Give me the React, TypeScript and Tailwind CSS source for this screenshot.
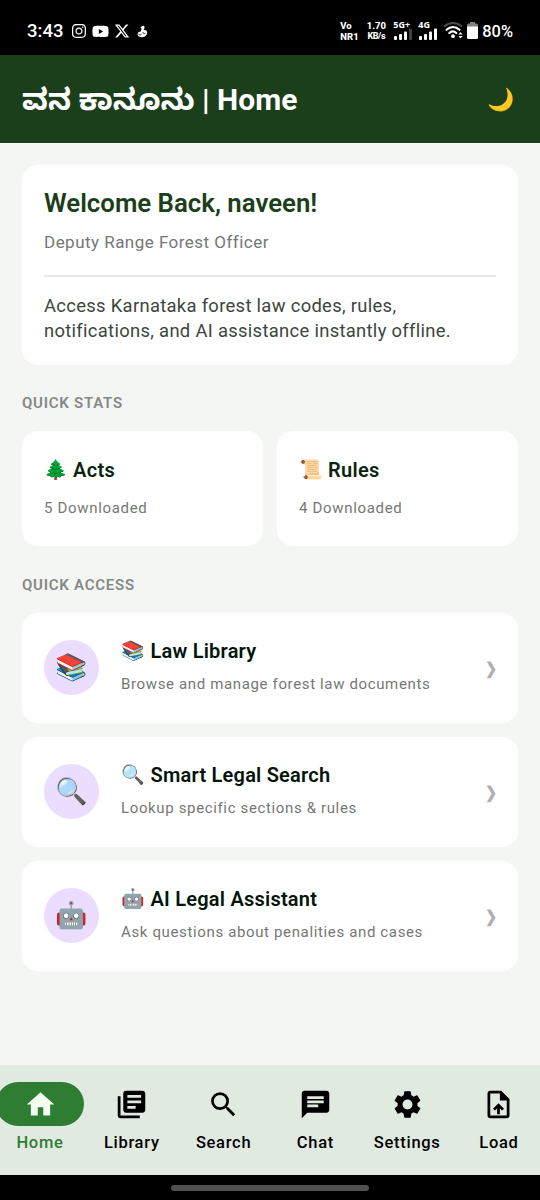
import type { ReactNode } from 'react';
import { FaInstagram, FaXTwitter, FaYoutube } from 'react-icons/fa6';
import { MdChat, MdHome, MdLibraryBooks, MdSearch, MdSettings, MdUploadFile } from 'react-icons/md';

type StatCardProps = {
  emoji: string;
  title: string;
  caption: string;
};

type AccessCardProps = {
  emoji: string;
  title: string;
  description: string;
};

const stats: StatCardProps[] = [
  { emoji: '🌲', title: 'Acts', caption: '5 Downloaded' },
  { emoji: '📜', title: 'Rules', caption: '4 Downloaded' },
];

const accessItems: AccessCardProps[] = [
  { emoji: '📚', title: 'Law Library', description: 'Browse and manage forest law documents' },
  { emoji: '🔍', title: 'Smart Legal Search', description: 'Lookup specific sections & rules' },
  { emoji: '🤖', title: 'AI Legal Assistant', description: 'Ask questions about penalities and cases' },
];

const navItems = [
  { label: 'Home', icon: MdHome, active: true },
  { label: 'Library', icon: MdLibraryBooks },
  { label: 'Search', icon: MdSearch },
  { label: 'Chat', icon: MdChat },
  { label: 'Settings', icon: MdSettings },
  { label: 'Load', icon: MdUploadFile },
];

function SignalBars({ label, dimLast }: { label: string; dimLast?: boolean }) {
  return (
    <div className="flex h-[19px] w-5 flex-col justify-between pb-[1px]">
      <span className="font-['Noto_Sans'] text-[9px] leading-[7px] font-bold whitespace-nowrap">{label}</span>
      <svg viewBox="0 0 20 12" className="h-3 w-5 shrink-0" fill="currentColor">
        <rect x="1" y="8" width="3" height="4" rx="1" />
        <rect x="6" y="6" width="3" height="6" rx="1" />
        <rect x="11" y="3.5" width="3" height="8.5" rx="1" />
        <rect x="16" y="0.5" width="3" height="11.5" rx="1" opacity={dimLast ? 0.25 : 1} />
      </svg>
    </div>
  );
}

function StatusBar() {
  return (
    <div className="flex h-[55px] shrink-0 items-center bg-black pt-[7px] pr-[27px] pl-[27px] text-white">
      <span className="pt-[1px] text-[18.5px] font-medium">3:43</span>
      <FaInstagram className="ml-2 size-[16px]" />
      <FaYoutube className="ml-[5px] size-[17px]" />
      <FaXTwitter className="ml-[5px] size-[16px]" />
      <svg viewBox="0 0 12 14" className="ml-[7px] h-[13px] w-[11px]" fill="currentColor">
        <path d="M5.2 1.4C6.5.4 8 .8 8.2 2.2c.2 1.2-.7 2.2-.9 3.3 1.6-.5 3.2.3 3.6 1.8.7 3-1.7 5.9-5.5 5.9C2.7 13.2.8 12 .6 10.2.4 8.4 1.9 7 3.6 7.2 4.6 6 5 4.7 4.9 3.6L3.7 2.8z" />
        <path d="M1.5 9.8c1 1 2.4.9 3.3.2M6.3 7.7c.2 1.2 1.3 1.8 2.7 1.3" fill="none" stroke="#000" strokeWidth="0.9" />
      </svg>
      <div className="ml-auto flex items-center">
        <div className="w-[19px] text-[9.5px] leading-[11px] font-extrabold">
          <div>Vo</div>
          <div>NR1</div>
        </div>
        <div className="ml-[6px] w-[22px] text-center text-[9.5px] leading-[11px] font-extrabold">
          <div>1.70</div>
          <div className="text-[9px] tracking-[-0.4px]">KB/s</div>
        </div>
        <div className="ml-[6px] flex gap-[5px]">
          <SignalBars label="5G+" dimLast />
          <SignalBars label="4G" />
        </div>
        <svg viewBox="0 0 20 17" className="ml-[5px] h-[17px] w-5" fill="none" stroke="currentColor">
          <path d="M1 4.5C6.5-.3 13.5-.3 19 4.5" strokeWidth="2" opacity="0.3" />
          <path d="M3.5 7.8c4-3.6 9-3.6 13 0M6.3 11c2.3-2 5-2 7 0" strokeWidth="2.1" strokeLinecap="round" />
          <circle cx="10" cy="14.2" r="1.9" fill="currentColor" stroke="none" />
          <path d="M17.5 10l2 2.5h-4zM17.5 16.5l2-2.5h-4z" fill="currentColor" stroke="none" />
        </svg>
        <svg viewBox="0 0 11 17" className="ml-1 h-[17px] w-[11px]" fill="currentColor">
          <path d="M3 0h5v1.5h1.5A1.5 1.5 0 0 1 11 3v2H0V3a1.5 1.5 0 0 1 1.5-1.5H3z" opacity="0.5" />
          <path d="M0 4.5h11v11a1.5 1.5 0 0 1-1.5 1.5h-8A1.5 1.5 0 0 1 0 15.5z" />
        </svg>
        <span className="ml-1 pt-[2px] text-[16.4px] font-medium">80%</span>
      </div>
    </div>
  );
}

function Card({ className, children }: { className: string; children: ReactNode }) {
  return <div className={`rounded-[16px] bg-white ${className}`}>{children}</div>;
}

function SectionTitle({ children }: { children: ReactNode }) {
  return <h2 className="text-[15px] leading-5 font-semibold tracking-[0.75px] text-[#858885]">{children}</h2>;
}

function StatCard({ emoji, title, caption }: StatCardProps) {
  return (
    <Card className="h-[115px] flex-1 px-[22px] pt-[25px]">
      <h3 className="flex items-center text-[20px] leading-[26px] font-semibold tracking-[0.3px] text-[#0b2410]">
        <span className="w-[29px] pt-[1px] text-[19px] tracking-normal">{emoji}</span>
        {title}
      </h3>
      <p className="mt-[15px] text-[15px] leading-5 tracking-[0.68px] text-[#747874]">{caption}</p>
    </Card>
  );
}

function AccessCard({ emoji, title, description }: AccessCardProps) {
  return (
    <Card className="flex h-[110px] items-center px-[22px] pb-[2px]">
      <div className="flex size-[55px] items-center justify-center rounded-full bg-[#eaddff] pt-[1px] text-[26px]">
        {emoji}
      </div>
      <div className="ml-[22px] flex-1 pb-[2px]">
        <h3 className="flex items-center text-[20px] leading-[26px] font-semibold tracking-[0.22px] text-[#03140a]">
          <span className="w-[29.5px] text-[19px] tracking-normal">{emoji}</span>
          {title}
        </h3>
        <p className="mt-[10px] text-[15px] leading-5 tracking-[0.64px] text-[#747874]">{description}</p>
      </div>
      <span className="-mr-[1px] origin-right scale-x-90 pt-[3px] text-[16px] font-bold text-[#b0b0b0]">❯</span>
    </Card>
  );
}

function BottomNav() {
  return (
    <nav className="h-[110px] shrink-0 bg-[#e0eae1] pt-[17px]">
      <div className="-mr-[3px] -ml-[4px] flex justify-between">
        {navItems.map(({ label, icon: Icon, active }) => (
          <div key={label} className={`flex w-[88px] flex-col items-center ${active ? 'text-[#2e7d32]' : 'text-black'}`}>
            <div
              className={`flex h-11 w-full items-center justify-center rounded-full ${active ? 'bg-[#2e7d32] text-[#f4fff2]' : ''}`}
            >
              <Icon className="size-[33px]" />
            </div>
            <span className="mt-[6px] text-[16.5px] leading-[22px] font-medium tracking-[0.7px]">{label}</span>
          </div>
        ))}
      </div>
    </nav>
  );
}

export default function App() {
  return (
    <div className="flex h-[1200px] w-[540px] flex-col overflow-hidden bg-[#f4f6f4] font-['Roboto','Noto_Sans_Kannada','Noto_Color_Emoji',sans-serif]">
      <StatusBar />
      <header className="flex h-[88px] shrink-0 items-center justify-between bg-[#1b3e1b] pr-[25px] pl-[22px] text-white">
        <h1 className="pt-[1px] text-[30px] font-bold whitespace-nowrap">ವನ ಕಾನೂನು | Home</h1>
        <span className="text-[22px]">🌙</span>
      </header>
      <main className="flex-1 px-[22px] pt-[22px]">
        <Card className="h-[200px] px-[22px] pt-[22px]">
          <h2 className="text-[25.8px] leading-8 font-semibold text-[#1b3e1b]">Welcome Back, naveen!</h2>
          <p className="mt-3 text-[17px] leading-[22px] tracking-[0.47px] text-[#747874]">Deputy Range Forest Officer</p>
          <hr className="mt-[22px] border-t-2 border-[#e8eae8]" />
          <p className="mt-4 text-[18.4px] leading-[25px] tracking-[0.31px] text-[#3c463d]">
            Access Karnataka forest law codes, rules,
            <br />
            notifications, and AI assistance instantly offline.
          </p>
        </Card>
        <div className="mt-[28px]">
          <SectionTitle>QUICK STATS</SectionTitle>
        </div>
        <div className="mt-[18px] flex gap-[14px]">
          {stats.map((stat) => (
            <StatCard key={stat.title} {...stat} />
          ))}
        </div>
        <div className="mt-[29px]">
          <SectionTitle>QUICK ACCESS</SectionTitle>
        </div>
        <div className="mt-[18px] flex flex-col gap-[14px]">
          {accessItems.map((item) => (
            <AccessCard key={item.title} {...item} />
          ))}
        </div>
      </main>
      <BottomNav />
      <div className="flex h-[25px] shrink-0 items-center justify-center bg-black">
        <div className="h-[6px] w-[198px] rounded-full bg-[#505050]" />
      </div>
    </div>
  );
}
